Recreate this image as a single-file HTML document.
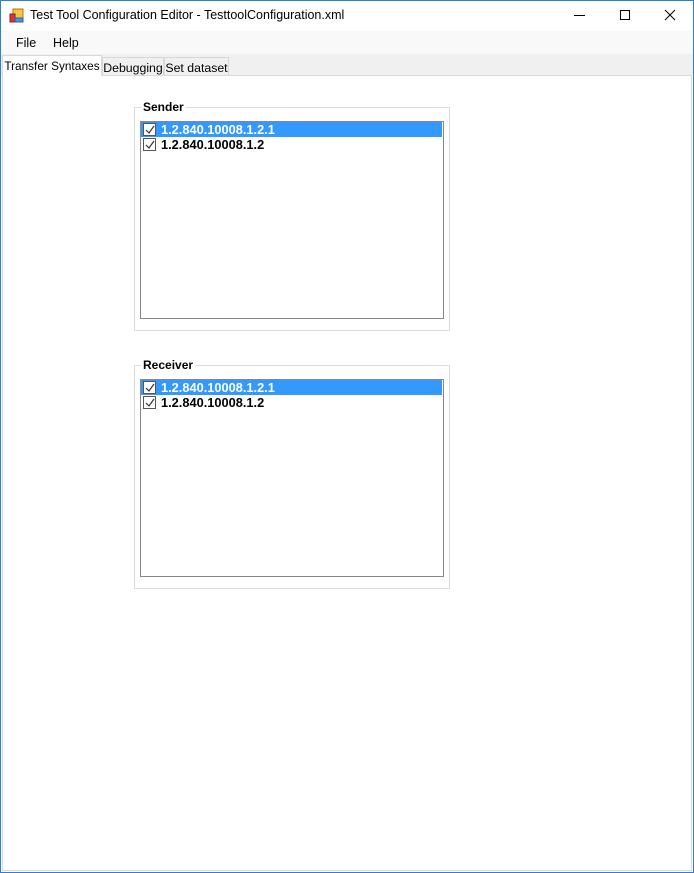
<!DOCTYPE html>
<html><head><style>
*{margin:0;padding:0;box-sizing:border-box}
body{width:694px;height:873px;background:#fff;font-family:"Liberation Sans",sans-serif;font-size:12px;position:relative;overflow:hidden}
.abs{position:absolute}
.win{left:0;top:0;width:694px;height:873px;border:1px solid #2b7fd6}
.title{left:30px;top:8px;font-size:12.5px;color:#000}
.menu{left:1px;top:31px;width:692px;height:23px;background:#f9f9f9}
.strip{left:1px;top:54px;width:692px;height:21px;background:#f0f0f0}
.tab{border:1px solid #d9d9d9;border-bottom:none;background:#f0f0f0;font-size:12px;padding-top:3px;text-align:center}
.page{left:2px;top:75px;width:690px;height:796px;border:1px solid #d9d9d9;background:#fff}
.gb{border:1px solid #dcdcdc}
.gl{background:#fff;font-weight:bold;font-size:12px;padding:0 2px}
.lb{border:1px solid #828790;background:#fff}
.row{height:15px;font-weight:bold;font-size:12.8px;line-height:15px;position:relative;padding-left:20px}
.sel{background:#3399ff;color:#fff;margin-right:1px}
.cb{position:absolute;left:2px;top:1px;width:13px;height:13px;border:1px solid #555;background:#fff}
</style></head><body>
<div class="abs win"></div>
<svg class="abs" style="left:9px;top:8px" width="16" height="16"><rect x="4" y="1" width="10" height="9" fill="#f4c542" stroke="#b07a10"/><rect x="1" y="6" width="5" height="8" fill="#d33" stroke="#822"/><rect x="6" y="10" width="8" height="4" fill="#5a8ed6" stroke="#2a5ca8"/></svg>
<div class="abs title">Test Tool Configuration Editor - TesttoolConfiguration.xml</div>
<svg class="abs" style="left:570px;top:8px" width="110" height="16">
<line x1="4" y1="7.5" x2="15" y2="7.5" stroke="#000"/>
<rect x="50.5" y="2.5" width="9" height="9" fill="none" stroke="#000"/>
<path d="M95 2 L105 12 M105 2 L95 12" stroke="#000"/>
</svg>
<div class="abs menu"></div>
<div class="abs" style="left:16px;top:36px;font-size:12.5px">File</div>
<div class="abs" style="left:53px;top:36px;font-size:12.5px">Help</div>
<div class="abs strip"></div>
<div class="abs tab" style="left:102px;top:57px;width:62px;height:18px;font-size:12.3px">Debugging</div>
<div class="abs tab" style="left:164px;top:57px;width:65px;height:18px;font-size:12.3px">Set dataset</div>
<div class="abs page"></div>
<div class="abs tab" style="left:2px;top:55px;width:100px;height:21px;background:#fff;padding-top:3px;font-size:11.8px">Transfer Syntaxes</div>

<div class="abs gb" style="left:134px;top:107px;width:316px;height:224px"></div>
<div class="abs gl" style="left:141px;top:100px">Sender</div>
<div class="abs lb" style="left:140px;top:121px;width:304px;height:198px">
<div class="row sel"><span class="cb"></span><svg class="abs" style="left:3px;top:2px" width="12" height="12"><path d="M2 6 L5 9 L10 2" fill="none" stroke="#333" stroke-width="1.2"/></svg>1.2.840.10008.1.2.1</div>
<div class="row"><span class="cb"></span><svg class="abs" style="left:3px;top:2px" width="12" height="12"><path d="M2 6 L5 9 L10 2" fill="none" stroke="#333" stroke-width="1.2"/></svg>1.2.840.10008.1.2</div>
</div>

<div class="abs gb" style="left:134px;top:365px;width:316px;height:224px"></div>
<div class="abs gl" style="left:141px;top:358px">Receiver</div>
<div class="abs lb" style="left:140px;top:379px;width:304px;height:198px">
<div class="row sel"><span class="cb"></span><svg class="abs" style="left:3px;top:2px" width="12" height="12"><path d="M2 6 L5 9 L10 2" fill="none" stroke="#333" stroke-width="1.2"/></svg>1.2.840.10008.1.2.1</div>
<div class="row"><span class="cb"></span><svg class="abs" style="left:3px;top:2px" width="12" height="12"><path d="M2 6 L5 9 L10 2" fill="none" stroke="#333" stroke-width="1.2"/></svg>1.2.840.10008.1.2</div>
</div>
</body></html>
